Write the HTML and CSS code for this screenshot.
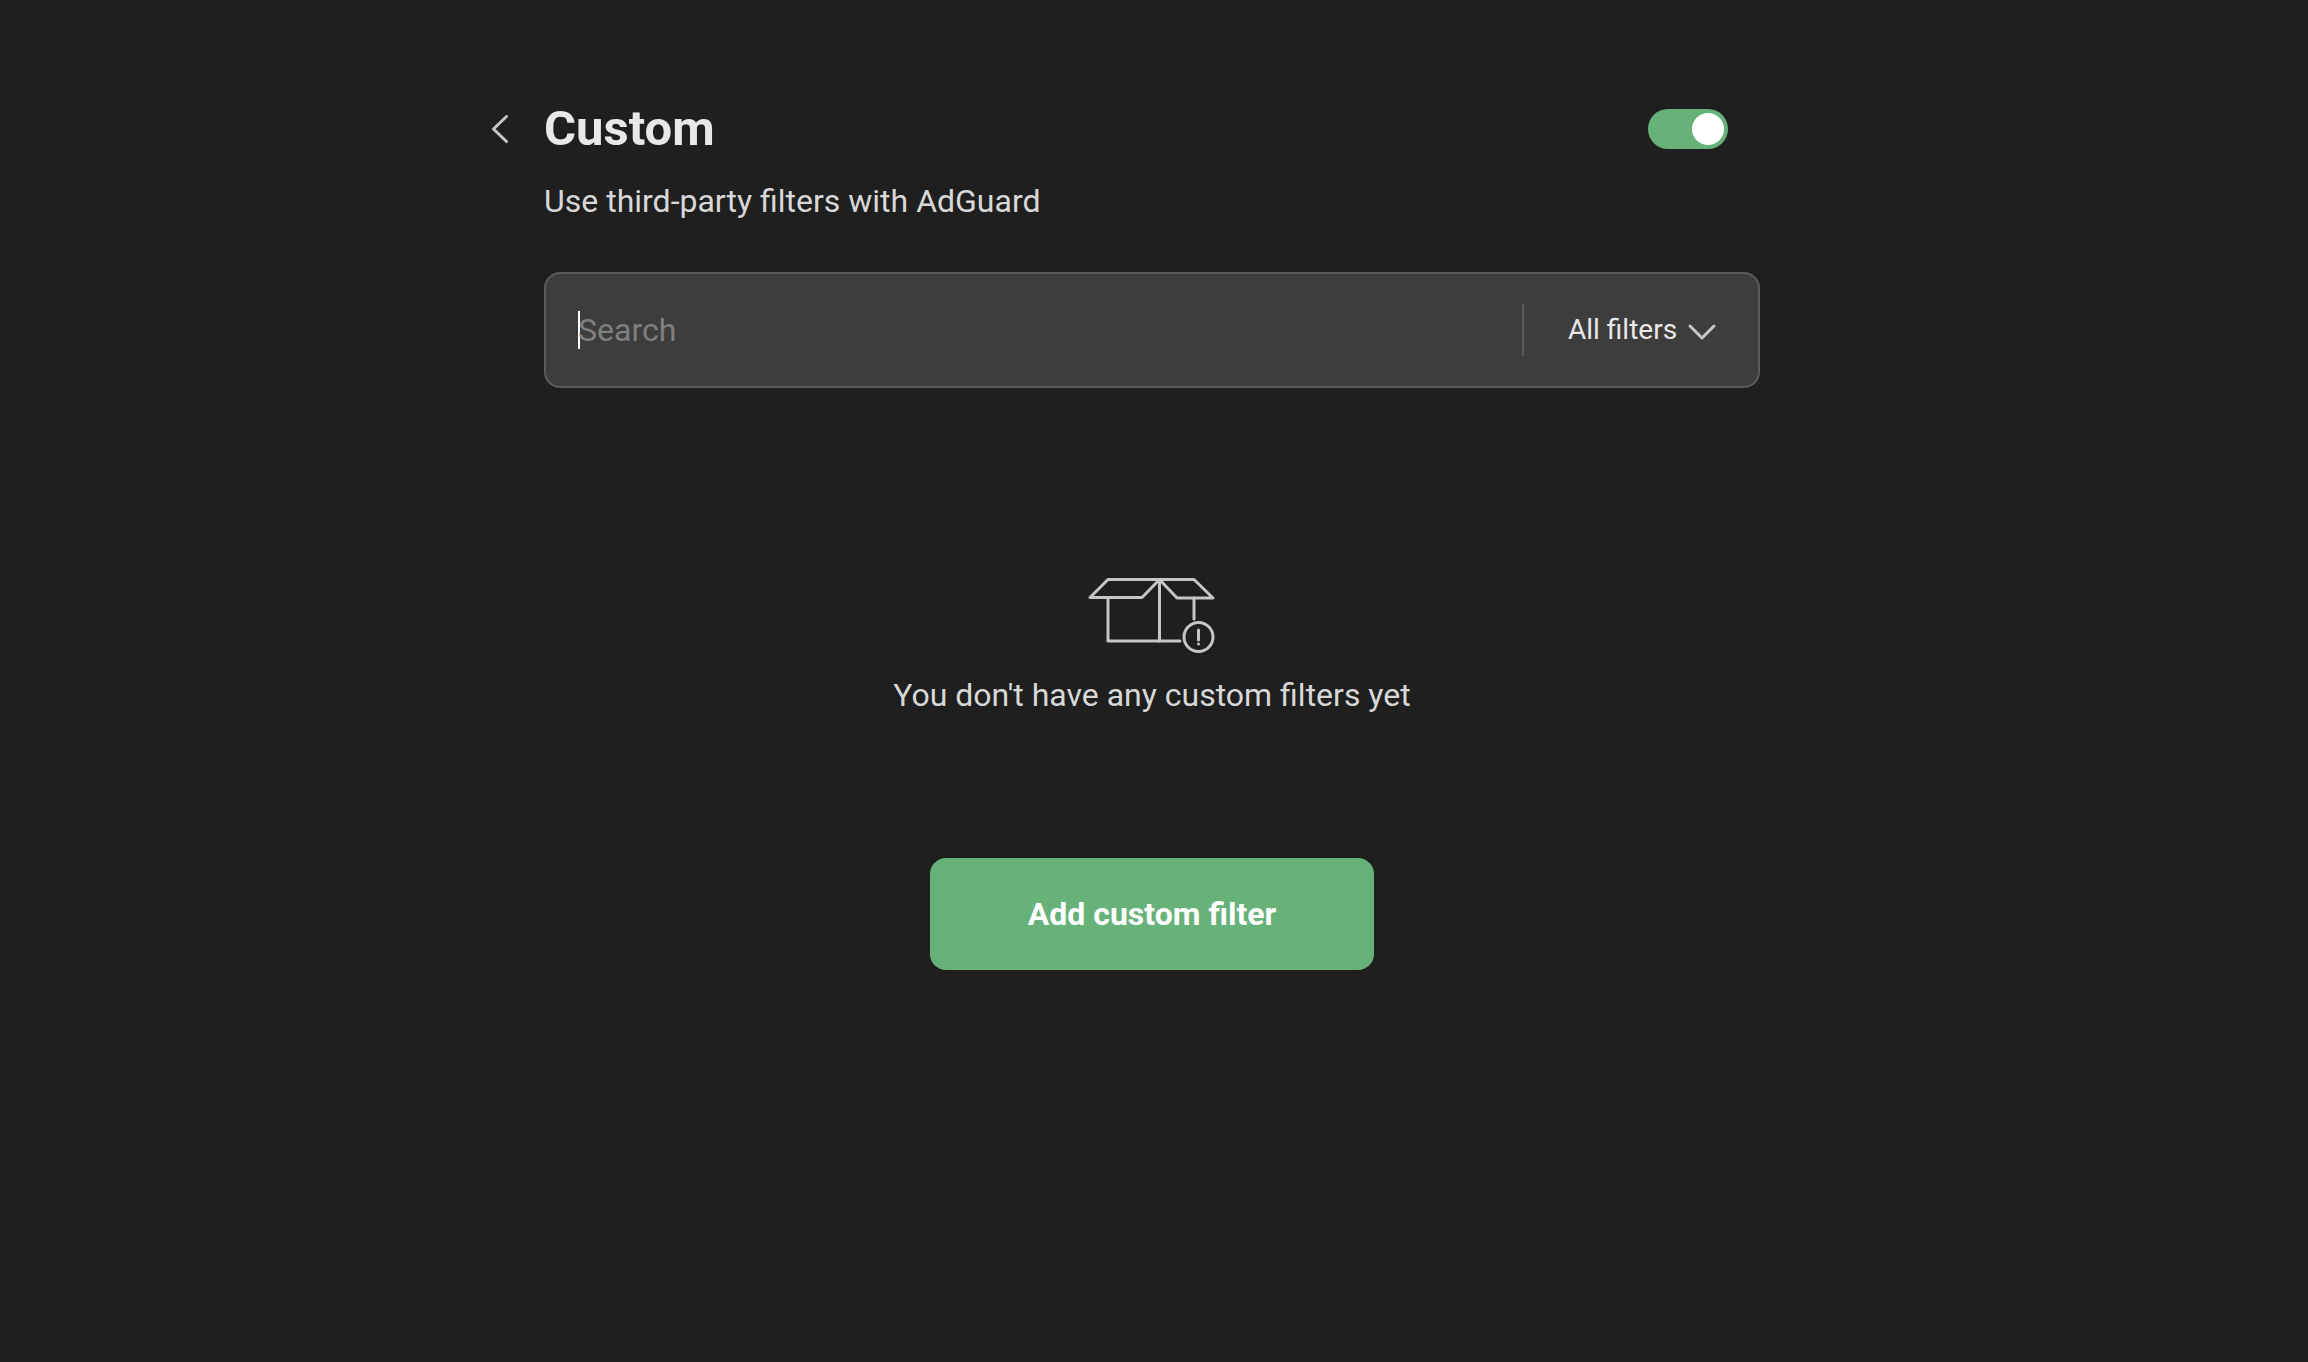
FILE: index.html
```html
<!DOCTYPE html>
<html lang="en">
<head>
    <meta charset="UTF-8">
    <meta name="viewport" content="width=device-width, initial-scale=1.0">
    <title>Custom filters</title>
    <link rel="stylesheet" href="styles.css">
</head>
<body>
    <main class="page">
        <header class="header">
            <button class="back" type="button" aria-label="Back">
                <svg width="20" height="32" viewBox="0 0 20 32">
                    <path d="M16.5 3.5L3.5 16l13 12.5"/>
                </svg>
            </button>
            <h1 class="title" id="title">Custom</h1>
            <input class="switch" type="checkbox" aria-labelledby="title" checked>
        </header>
        <p class="description">Use third-party filters with AdGuard</p>

        <div class="search">
            <input class="search-input" type="text" placeholder="Search" aria-label="Search">
            <div class="filter">
                <select class="filter-select" aria-label="Filter list">
                    <option>All filters</option>
                    <option>Enabled</option>
                    <option>Disabled</option>
                </select>
                <svg class="filter-arrow" width="32" height="32" viewBox="0 0 32 32">
                    <path d="M4 12l12 12 12-12"/>
                </svg>
            </div>
        </div>

        <section class="empty">
            <svg class="empty-icon" width="128" height="80" viewBox="0 0 128 80">
                <path d="M71.5 3.5H20L2 21.5h52L71.5 3.5H106L125 22H89L71.5 3.5V65"/>
                <path d="M20 21.5V65h72M106 22v21"/>
                <circle cx="110.5" cy="61" r="14.5"/>
                <path d="M110.5 54v10M110.5 68v.1"/>
            </svg>
            <p class="empty-text">You don't have any custom filters yet</p>
            <button class="add" type="button">Add custom filter</button>
        </section>
    </main>
</body>
</html>
```

FILE: styles.css
```css
* {
    box-sizing: border-box;
}
body {
    margin: 0;
    padding-right: 4px;
    background-color: #1f1f1f;
    color: #d8d8d8;
    font-family: Roboto, "Liberation Sans", sans-serif;
    font-size: 32px;
    line-height: 40px;
}
button,
input,
select {
    margin: 0;
    padding: 0;
    border: none;
    background: none;
    font-family: inherit;
}
svg {
    display: block;
    fill: none;
    stroke: #c6c6c6;
    stroke-width: 3;
    stroke-linecap: round;
    stroke-linejoin: round;
}
.page {
    max-width: 1216px;
    margin: 0 auto;
    padding: 101px 0;
}
.header {
    display: flex;
    align-items: center;
    margin-left: -54px;
    padding-right: 32px;
}
.back {
    width: 54px;
    cursor: pointer;
}
.title {
    margin: 0;
    color: #e8e8e8;
    font-size: 49px;
    font-weight: 700;
    line-height: 56px;
}
.switch {
    width: 80px;
    height: 40px;
    margin-left: auto;
    padding: 4px;
    border-radius: 20px;
    background-color: #67b279;
    appearance: none;
    cursor: pointer;
}
.switch::before {
    content: "";
    display: block;
    width: 32px;
    height: 32px;
    border-radius: 50%;
    background-color: #fff;
}
.switch:checked::before {
    margin-left: auto;
}
.description {
    margin: 24px 0 51px;
}
.search {
    display: flex;
    align-items: center;
    height: 116px;
    padding: 0 32px;
    border: 2px solid #5b5b5b;
    border-radius: 16px;
    background-color: #3d3d3d;
}
.search-input {
    flex: 1;
    min-width: 0;
    height: 38px;
    background: linear-gradient(#fff, #fff) no-repeat left / 2px 100%;
    color: #fff;
    font-size: 32px;
    outline: none;
    caret-color: transparent;
}
.search-input::placeholder {
    color: #7f7f7f;
}
.filter {
    display: flex;
    align-items: center;
    height: 52px;
    padding: 0 8px 0 44px;
    border-left: 2px solid #5b5b5b;
}
.filter-select {
    margin-right: -32px;
    padding-right: 40px;
    color: #e8e8e8;
    font-size: 28px;
    line-height: 36px;
    appearance: none;
    cursor: pointer;
}
.filter-arrow {
    pointer-events: none;
}
.empty {
    display: flex;
    flex-direction: column;
    align-items: center;
    padding-top: 188px;
}
.empty-text {
    margin: 19px 0 143px;
}
.add {
    width: 444px;
    max-width: 100%;
    height: 112px;
    border-radius: 16px;
    background-color: #67b279;
    color: #fff;
    font-size: 32px;
    font-weight: 700;
    cursor: pointer;
}
```
